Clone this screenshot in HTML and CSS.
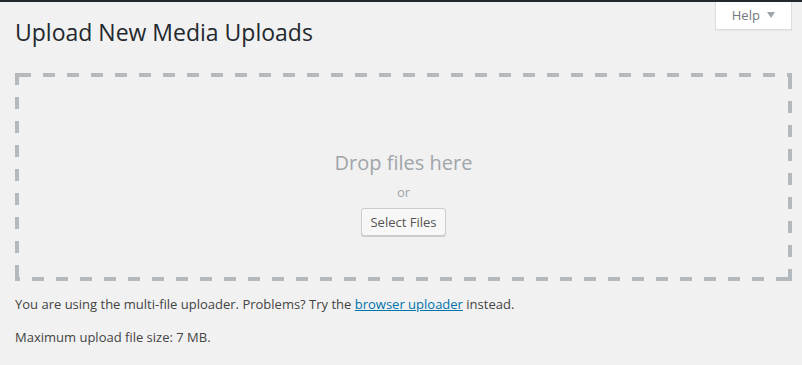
FILE: index.html
```html
<!DOCTYPE html>
<html lang="en">
<head>
  <meta charset="UTF-8" />
  <title>Upload New Media</title>
  <link rel="stylesheet" href="styles.css">
</head>
<body>
  <div class="topbar"></div>

  <div class="wrap">
    <!-- Help tab -->
    <div class="help-tab">Help <span class="arrow"></span></div>

    <h1>Upload New Media Uploads</h1>

    <!-- Drag & drop area -->
    <div class="drop-area">
      <div class="drop-inside">
        <p class="drop-info">Drop files here</p>
        <p class="drop-or">or</p>
        <button class="button">Select Files</button>
      </div>
    </div>

    <p class="note">You are using the multi-file uploader. Problems? Try the <a href="#">browser uploader</a> instead.</p>
    <p class="note">Maximum upload file size: 7 MB.</p>
  </div>
</body>
</html>
```

FILE: styles.css
```css
html, body {
  margin: 0;
  padding: 0;
}
body {
  background: #f1f1f1;
  color: #444;
  font-family: "Open Sans", sans-serif;
  font-size: 13px;
  line-height: 1.5;
}

.topbar {
  height: 2px;
  background: #23282d;
}

.wrap {
  position: relative;
  padding: 0 10px 0 15px;
}

/* --- Help tab --- */
.help-tab {
  position: absolute;
  top: 0;
  right: 10px;
  width: 77px;
  height: 28px;
  box-sizing: border-box;
  background: #fff;
  border: 1px solid #ddd;
  border-top: none;
  box-shadow: 0 1px 1px rgba(0,0,0,0.04);
  color: #72777c;
  font-size: 13px;
  line-height: 27px;
  text-align: center;
}
.help-tab .arrow {
  display: inline-block;
  width: 0;
  height: 0;
  border-left: 4px solid transparent;
  border-right: 4px solid transparent;
  border-top: 6px solid #a0a5aa;
  margin-left: 4px;
  vertical-align: 2px;
}

h1 {
  margin: 0;
  padding: 16px 0 11px;
  font-size: 23px;
  font-weight: 400;
  line-height: 29px;
  color: #23282d;
}

/* --- Drop area (dashed border drawn as gradients) --- */
.drop-area {
  box-sizing: border-box;
  height: 208px;
  margin-top: 15px;
  padding: 4px;
  background-image:
    linear-gradient(to right, #b4b9be 50%, transparent 50%),
    linear-gradient(to right, #b4b9be 50%, transparent 50%),
    linear-gradient(to bottom, #b4b9be 50%, transparent 50%),
    linear-gradient(to bottom, #b4b9be 50%, transparent 50%);
  background-size: 24px 4px, 24px 4px, 4px 24px, 4px 24px;
  background-position: 4px 0, -7px 100%, 0 0, 100% 4px;
  background-repeat: repeat-x, repeat-x, repeat-y, repeat-y;
}
.drop-inside {
  text-align: center;
  padding-top: 72px;
}
.drop-info {
  margin: 0;
  font-size: 20px;
  line-height: 28px;
  color: #a0a5aa;
}
.drop-or {
  margin: 6px 0 6px;
  font-size: 13px;
  line-height: 19px;
  color: #a0a5aa;
}
.button {
  font-family: inherit;
  font-size: 13px;
  line-height: 26px;
  height: 28px;
  padding: 0 8px 1px;
  background: #f7f7f7;
  border: 1px solid #ccc;
  border-radius: 3px;
  box-shadow: 0 1px 0 #ccc;
  color: #555;
  cursor: pointer;
}

.note {
  margin: 13px 0 0;
}
.note:first-of-type {
  margin-top: 14px;
}
.note a {
  color: #0073aa;
}
```
